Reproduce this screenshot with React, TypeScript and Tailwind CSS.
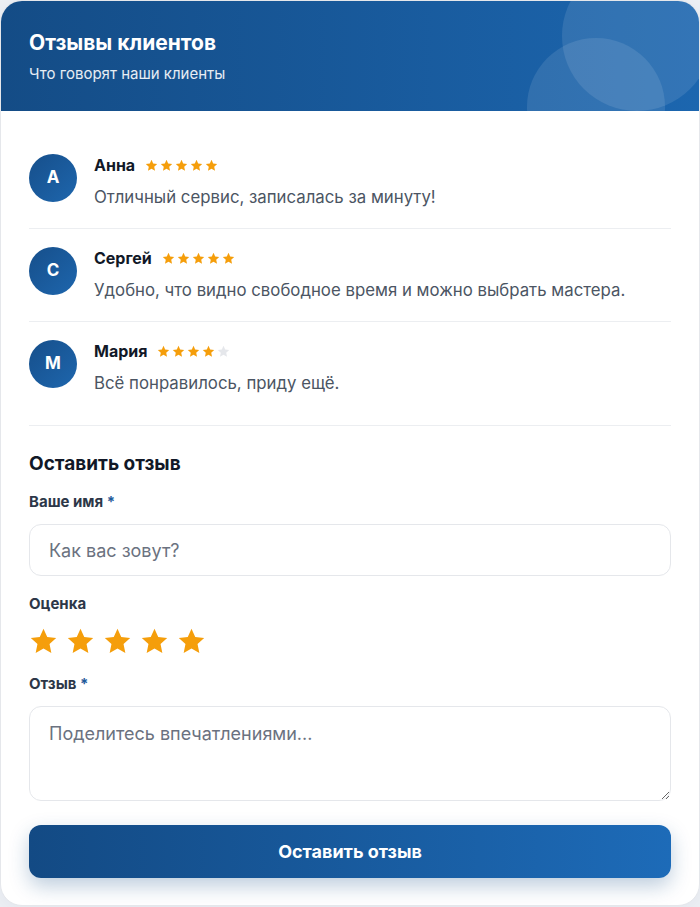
import React from 'react'

const reviews = [
  { letter: 'А', name: 'Анна', rating: 5, text: 'Отличный сервис, записалась за минуту!' },
  { letter: 'С', name: 'Сергей', rating: 5, text: 'Удобно, что видно свободное время и можно выбрать мастера.' },
  { letter: 'М', name: 'Мария', rating: 4, text: 'Всё понравилось, приду ещё.' },
]

function Star({ size, filled }: { size: number; filled: boolean }) {
  return (
    <svg width={size} height={size} viewBox="0 0 24 24" className={filled ? 'text-[#f59e0b]' : 'text-[#e5e7eb]'}>
      <polygon fill="currentColor" points="12,1.5 15.1,8.2 22.5,9.1 17,14.1 18.5,21.5 12,17.8 5.5,21.5 7,14.1 1.5,9.1 8.9,8.2" />
    </svg>
  )
}

export default function App() {
  return (
    <div className="min-h-screen bg-[#eef1f5] font-['Inter',sans-serif]">
      <div className="h-[906px] rounded-[22px] border border-[#e5e7eb] bg-white overflow-hidden shadow-[0_4px_24px_rgba(15,40,80,0.06)] flex flex-col">
        {/* header */}
        <div className="relative h-[110px] shrink-0 overflow-hidden bg-gradient-to-r from-[#144c86] to-[#1c66af] px-[28px] pt-[28px]">
          <div className="absolute w-[150px] h-[150px] rounded-full bg-white/10 left-[561px] top-[-40px]" />
          <div className="absolute w-[138px] h-[138px] rounded-full bg-white/10 left-[526px] top-[37px]" />
          <h1 className="relative text-[21px] leading-[28px] font-bold text-white">Отзывы клиентов</h1>
          <p className="relative mt-[7px] text-[15px] leading-[20px] text-white/90">Что говорят наши клиенты</p>
        </div>

        <div className="px-[28px]">
          <div className="pt-[25px] pb-[11px] border-b border-[#eceef1]">
            {reviews.map((r, i) => (
              <div key={r.name} className={`flex gap-[17px] py-[18px] ${i < reviews.length - 1 ? 'border-b border-[#eceef1]' : ''}`}>
                <div className="w-12 h-12 shrink-0 rounded-full bg-gradient-to-br from-[#164f8b] to-[#1e66ad] flex items-center justify-center text-white text-[17px] font-bold">
                  {r.letter}
                </div>
                <div>
                  <div className="flex items-center gap-[10px] h-[22px]">
                    <span className="text-[16px] font-bold text-[#111827]">{r.name}</span>
                    <div className="flex gap-[2px]">
                      {[1, 2, 3, 4, 5].map(n => <Star key={n} size={13} filled={n <= r.rating} />)}
                    </div>
                  </div>
                  <p className="mt-[8px] text-[16.8px] leading-[26px] text-[#4b5563]">{r.text}</p>
                </div>
              </div>
            ))}
          </div>

          <h2 className="mt-[26px] text-[19px] leading-[24px] font-bold text-[#111827]">Оставить отзыв</h2>

          <label className="block mt-[16px] text-[15px] leading-[20px] font-bold text-[#2d3748]">
            Ваше имя <span className="text-[#1e5a9a]">*</span>
          </label>
          <input
            placeholder="Как вас зовут?"
            className="mt-[12px] block w-full h-[52px] rounded-[12px] border border-[#e5e7eb] px-[19px] text-[18px] text-[#111827] placeholder:text-[#6b7280] outline-none"
          />

          <label className="block mt-[18px] text-[15px] leading-[20px] font-bold text-[#2d3748]">Оценка</label>
          <div className="mt-[13px] flex gap-[8px]">
            {[1, 2, 3, 4, 5].map(n => <Star key={n} size={29} filled />)}
          </div>

          <label className="block mt-[18px] text-[15px] leading-[20px] font-bold text-[#2d3748]">
            Отзыв <span className="text-[#1e5a9a]">*</span>
          </label>
          <textarea
            placeholder="Поделитесь впечатлениями..."
            className="mt-[12px] block w-full h-[95px] rounded-[12px] border border-[#e5e7eb] px-[19px] py-[14px] text-[18px] leading-[26px] text-[#111827] placeholder:text-[#6b7280] outline-none"
          />

          <button className="mt-[24px] w-full h-[53px] rounded-[12px] bg-gradient-to-r from-[#134a84] to-[#1d6bb8] text-white text-[18px] font-bold shadow-[0_8px_20px_rgba(19,74,132,0.28)]">
            Оставить отзыв
          </button>
        </div>
      </div>
    </div>
  )
}
